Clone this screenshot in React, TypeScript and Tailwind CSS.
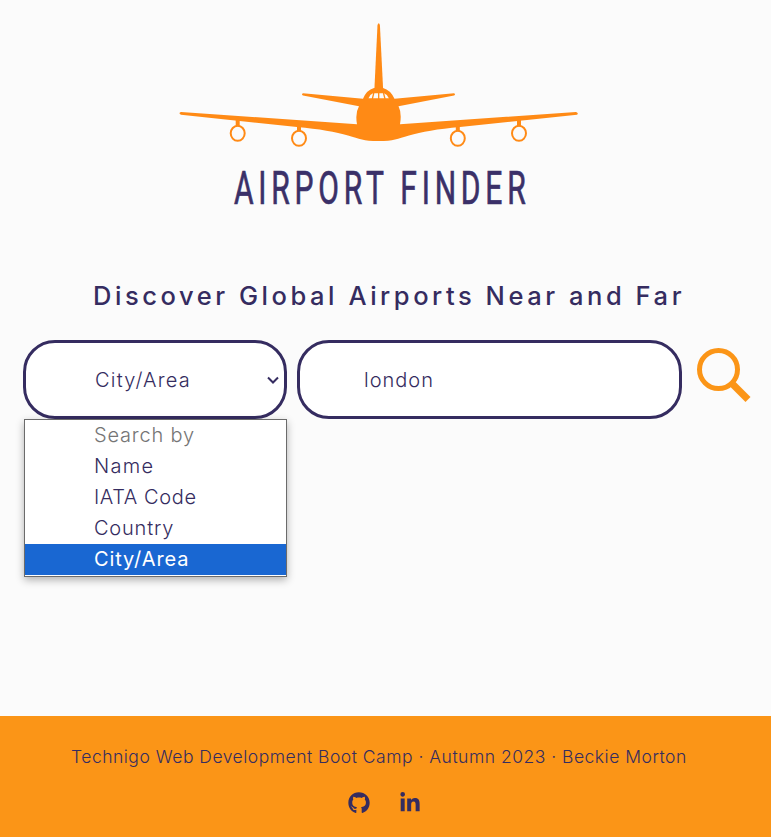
import { FaGithub, FaLinkedinIn } from "react-icons/fa";

const options = [
  { label: "Search by", style: "text-[#757575] tracking-[0.8px]" },
  { label: "Name", style: "text-[#352c60] tracking-[1.3px]" },
  { label: "IATA Code", style: "text-[#352c60] tracking-[0.6px]" },
  { label: "Country", style: "text-[#352c60] tracking-[0.8px]" },
  { label: "City/Area", style: "bg-[#1967d2] text-white font-normal tracking-[0.9px]" },
];

function Engine({ x, y }: { x: number; y: number }) {
  return (
    <g>
      <path d={`M${x - 2} ${y - 14}h4v7h-4z`} fill="#ff8a15" />
      <ellipse cx={x} cy={y} rx="7" ry="7.500" fill="none" stroke="#ff8a15" strokeWidth="2" />
    </g>
  );
}

function Logo() {
  return (
    <svg viewBox="170 10 420 205" className="ml-[170px] block h-[205px] w-[420px]" role="img" aria-label="Airport Finder">
      <g fill="#ff8a15">
        <path d="M374.300 91 L377.500 25 Q378.700 21.500 379.900 25 L383.200 91Z" />
        <path d="M303 93.300 L363 98.800 Q366.500 90 374 88 H383 Q390.500 90 394.500 98.800 L454 93.300 Q456 94.500 454 95.500 L398.500 106.300 Q402 113 400 124.200 L576 112 Q579 113 577 114.800 L460 127 Q427 130 409 135.500 C397 139 394 141 378.500 141 C363 141 360 139 348 135.500 Q330 130 297 127 L181 114.800 Q178 113 181 112 L357 124.200 Q355 113 359 106.300 L303 95.500 Q301 94.500 303 93.300Z" />
      </g>
      <path d="M368.500 98.300 Q370 94.500 373 93.300 L384 93.300 Q387.300 94.500 388.800 98.300Z" fill="#fbfbfb" />
      <path d="M373.800 93 L372.300 99 M378.700 93 V99 M383.500 93 L385 99" stroke="#ff8a15" strokeWidth="1.300" />
      <Engine x={237.700} y={133.300} />
      <Engine x={299} y={138.300} />
      <Engine x={457.800} y={138.300} />
      <Engine x={519} y={133.300} />
      <g transform="translate(234 204) scale(.66 1)">
        <text
          x="0"
          y="0"
          textLength="442"
          fontSize="45.500"
          strokeWidth="0.700"
          className="fill-[#3a3068] stroke-[#3a3068] font-[Roboto,sans-serif] font-normal"
        >
          AIRPORT FINDER
        </text>
      </g>
    </svg>
  );
}

export default function App() {
  return (
    <div className="flex h-[837px] w-[771px] flex-col overflow-hidden bg-[#fbfbfb] font-[Inter,sans-serif] text-[#352c60]">
      <header className="pt-[10px]">
        <Logo />
      </header>
      <main className="flex-1">
        <h1 className="mt-[61px] ml-[93px] h-10 text-[25.5px] leading-10 font-medium tracking-[3.55px] whitespace-nowrap">
          Discover Global Airports Near and Far
        </h1>
        <div className="mt-6 ml-[23px] flex text-xl font-light">
          <div className="relative h-[79px] w-[264px]">
            <button className="flex h-full w-full items-center justify-between rounded-[32px] border-3 border-[#352c60] bg-white pr-[5px] pl-[69px] font-light">
              <span className="tracking-[1.2px]">City/Area</span>
              <svg viewBox="0 0 12 8" className="h-2 w-3" fill="none" stroke="#352c60" strokeWidth="2">
                <path d="M1 1.500 6 6.500 11 1.500" />
              </svg>
            </button>
            <ul className="absolute top-[79px] left-px h-[158px] w-[263px] border border-[#6b6b6b] bg-white shadow-[0_3px_8px_rgba(0,0,0,0.3)]">
              {options.map((option) => (
                <li key={option.label} className={`h-[31px] pl-[69px] leading-[31px] ${option.style}`}>
                  {option.label}
                </li>
              ))}
            </ul>
          </div>
          <input
            className="ml-[10px] h-[79px] w-[385px] rounded-[32px] border-3 border-[#352c60] bg-white pl-[64px] tracking-[1px] outline-none"
            defaultValue="london"
          />
          <svg viewBox="0 0 54 56" className="mt-[7px] ml-[15px] h-14 w-[54px]" fill="none" stroke="#fb9517">
            <circle cx="21.500" cy="22.500" r="19" strokeWidth="5" />
            <path d="M34 35.500 51 52.500" strokeWidth="7" />
          </svg>
        </div>
      </main>
      <footer className="h-[121px] bg-[#fb9517] pt-[27px]">
        <p className="ml-[71px] h-7 text-[17.5px] leading-7 font-light tracking-[0.5px] whitespace-nowrap">
          Technigo Web Development Boot Camp · Autumn 2023 · Beckie Morton
        </p>
        <div className="mt-[21px] ml-[348px] flex gap-[29px]">
          <FaGithub className="size-[22px]" />
          <FaLinkedinIn className="size-[22px]" />
        </div>
      </footer>
    </div>
  );
}
